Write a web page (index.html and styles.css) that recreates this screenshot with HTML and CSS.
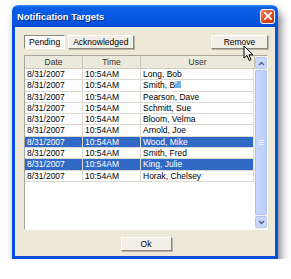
FILE: index.html
```html
<!DOCTYPE html>
<html lang="en">
<head>
    <meta charset="UTF-8">
    <title>Notification Targets</title>
    <link rel="stylesheet" href="styles.css">
</head>
<body>
    <div class="window">
        <div class="titlebar">
            <span class="title">Notification Targets</span>
            <span class="close-btn">
                <svg width="8" height="8" viewBox="0 0 8 8"><path d="M1 1L7 7M7 1L1 7" stroke="#fff" stroke-width="1.8" stroke-linecap="square"/></svg>
            </span>
        </div>
        <div class="frame">
            <div class="toolbar">
                <div class="tabs">
                    <button class="btn tab active">Pending</button>
                    <button class="btn tab">Acknowledged</button>
                </div>
                <button class="btn remove">Remove</button>
            </div>
            <div class="list">
                <div class="grid">
                    <div class="row head">
                        <div class="cell c-date">Date</div>
                        <div class="cell c-time">Time</div>
                        <div class="cell c-user">User</div>
                    </div>
                    <div class="row"><div class="cell c-date">8/31/2007</div><div class="cell c-time">10:54AM</div><div class="cell c-user">Long, Bob</div></div>
                    <div class="row"><div class="cell c-date">8/31/2007</div><div class="cell c-time">10:54AM</div><div class="cell c-user">Smith, Bill</div></div>
                    <div class="row"><div class="cell c-date">8/31/2007</div><div class="cell c-time">10:54AM</div><div class="cell c-user">Pearson, Dave</div></div>
                    <div class="row"><div class="cell c-date">8/31/2007</div><div class="cell c-time">10:54AM</div><div class="cell c-user">Schmitt, Sue</div></div>
                    <div class="row"><div class="cell c-date">8/31/2007</div><div class="cell c-time">10:54AM</div><div class="cell c-user">Bloom, Velma</div></div>
                    <div class="row"><div class="cell c-date">8/31/2007</div><div class="cell c-time">10:54AM</div><div class="cell c-user">Arnold, Joe</div></div>
                    <div class="row selected"><div class="cell c-date">8/31/2007</div><div class="cell c-time">10:54AM</div><div class="cell c-user">Wood, Mike</div></div>
                    <div class="row"><div class="cell c-date">8/31/2007</div><div class="cell c-time">10:54AM</div><div class="cell c-user">Smith, Fred</div></div>
                    <div class="row selected"><div class="cell c-date">8/31/2007</div><div class="cell c-time">10:54AM</div><div class="cell c-user">King, Julie</div></div>
                    <div class="row"><div class="cell c-date">8/31/2007</div><div class="cell c-time">10:54AM</div><div class="cell c-user">Horak, Chelsey</div></div>
                </div>
                <div class="scrollbar">
                    <div class="sb-btn">
                        <svg width="7" height="5" viewBox="0 0 7 5"><path d="M1 4L3.5 1.5L6 4" fill="none" stroke="#4d6185" stroke-width="1.4"/></svg>
                    </div>
                    <div class="sb-thumb"><span class="grip"></span></div>
                    <div class="sb-btn">
                        <svg width="7" height="5" viewBox="0 0 7 5"><path d="M1 1L3.5 3.5L6 1" fill="none" stroke="#4d6185" stroke-width="1.4"/></svg>
                    </div>
                </div>
            </div>
            <div class="footer">
                <button class="btn ok">Ok</button>
            </div>
        </div>
        <svg class="cursor" width="12" height="17" viewBox="0 0 12 17">
            <path d="M1 1L1 13L4 10.5L6.2 15.5L8 14.7L5.9 9.8L9.8 9.8Z" fill="#fff" stroke="#000" stroke-width="1" stroke-linejoin="round"/>
        </svg>
    </div>
</body>
</html>
```
FILE: styles.css
```css
body {
    margin: 0;
    padding: 5px 0 0 12px;
    background: #fff;
    font-family: 'Liberation Sans', Arial, sans-serif;
}
.window {
    position: relative;
    width: 266px;
    box-shadow: 3px 6px 9px rgba(0, 0, 0, 0.5);
    border-radius: 6px 6px 0 0;
}
.titlebar {
    height: 22px;
    display: flex;
    align-items: center;
    justify-content: space-between;
    padding: 0 3px 0 5px;
    border-radius: 6px 6px 0 0;
    background: linear-gradient(to bottom, #3c8cf7 0%, #0a5fe8 12%, #0758e4 50%, #0653de 85%, #0847c8 100%);
}
.title {
    color: #fff;
    font-size: 9.4px;
    font-weight: bold;
    text-shadow: 1px 1px 0 #0a2a82;
}
.close-btn {
    width: 13px;
    height: 13px;
    display: flex;
    align-items: center;
    justify-content: center;
    border: 1px solid #fff;
    border-radius: 3px;
    background: linear-gradient(135deg, #e98a6c, #d6461e 60%, #c33a14);
}
.frame {
    background: #ece9d8;
    border: 3px solid #0a4fdc;
    border-top: none;
    height: 221px;
    padding: 8px 7px 0 9px;
    display: flex;
    flex-direction: column;
}
.toolbar {
    display: flex;
    justify-content: space-between;
    align-items: flex-start;
    height: 20px;
}
.tabs {
    display: flex;
    gap: 3px;
}
.btn {
    font-family: inherit;
    font-size: 8.5px;
    color: #000;
    background: #f2f0e6;
    border: 1px solid;
    border-color: #fff #8a887e #8a887e #fff;
    box-shadow: 1px 1px 0 #b8b5a6;
    padding: 0;
    height: 14px;
    line-height: 12px;
}
.tab {
    padding: 0 4px;
}
.tab.active {
    background: #fbfaf6;
    border-color: #8a887e #fff #fff #8a887e;
    box-shadow: none;
}
.remove {
    width: 57px;
}
.list {
    display: flex;
    height: 173px;
    border: 1px solid #a7a69c;
    border-right-color: #fff;
    border-bottom-color: #fff;
    background: #fff;
}
.grid {
    flex: 1;
}
.row {
    display: flex;
    height: 10.3px;
    border-bottom: 1px solid #dcdad0;
    font-size: 8.5px;
    line-height: 10.3px;
    color: #000;
    width: 229px;
}
.row.head {
    height: 12px;
    line-height: 12px;
    background: #ebe9dc;
    border-bottom: 1px solid #cfccbd;
    width: 230px;
}
.cell {
    padding-left: 2px;
    border-right: 1px solid #dcdad0;
    white-space: nowrap;
    overflow: hidden;
}
.head .cell {
    text-align: center;
    padding-left: 0;
    color: #333;
    border-right: 1px solid #c9c6b6;
}
.c-date {
    width: 55px;
}
.c-time {
    width: 55px;
}
.c-user {
    flex: 1;
}
.head .c-date, .head .c-time {
    width: 57px;
}
.row.selected {
    background: #316ac5;
    color: #fff;
}
.scrollbar {
    width: 12px;
    display: flex;
    flex-direction: column;
    gap: 1px;
    padding: 1px 0;
    background: #f4f3ee;
}
.sb-btn {
    height: 10px;
    display: flex;
    align-items: center;
    justify-content: center;
    background: #c8d8fb;
    border: 1px solid #b3c7f2;
    border-radius: 2px;
}
.sb-thumb {
    flex: 1;
    display: flex;
    align-items: center;
    justify-content: center;
    background: linear-gradient(to right, #c6d6fc, #bacffb);
    border: 1px solid #a9c0f0;
    border-radius: 2px;
}
.grip {
    width: 5px;
    height: 6px;
    background: repeating-linear-gradient(to bottom, #eef3fe 0, #eef3fe 1px, transparent 1px, transparent 2px);
}
.footer {
    display: flex;
    justify-content: center;
    padding-top: 7px;
}
.ok {
    width: 51px;
}
.cursor {
    position: absolute;
    left: 231px;
    top: 40px;
}
```
